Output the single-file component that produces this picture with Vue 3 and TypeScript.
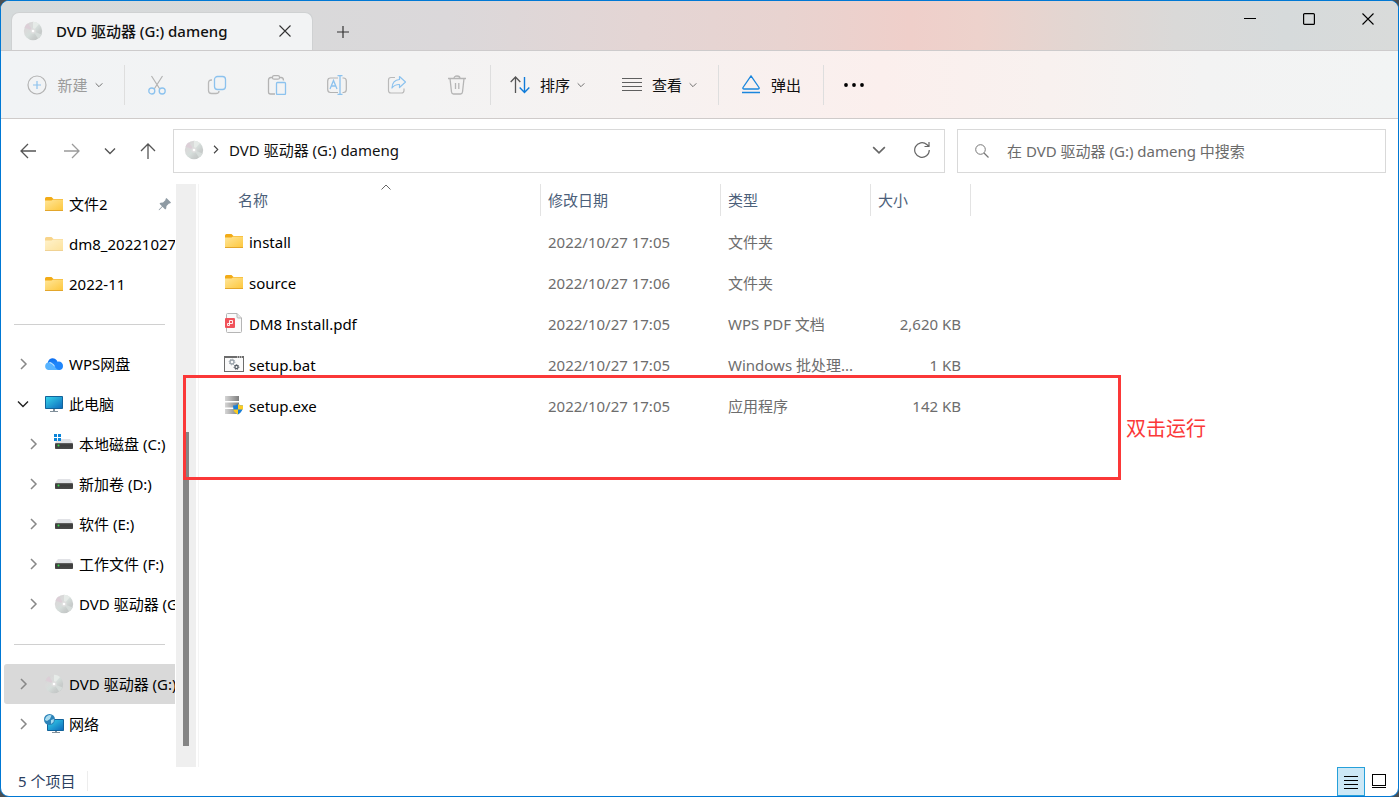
<script setup lang="ts">
import { ref } from 'vue'

interface TreeItem {
  label: string
  icon: string
  level: number
  state?: 'closed' | 'open'
  pinned?: boolean
  selected?: boolean
}

interface FileRow {
  name: string
  icon: string
  date: string
  type: string
  size: string
}

const drive = 'DVD 驱动器 (G:) dameng'
const query = ref('')

const groups: TreeItem[][] = [
  [
    { label: '文件2', icon: 'folder', level: 0, pinned: true },
    { label: 'dm8_20221027', icon: 'folder-pale', level: 0 },
    { label: '2022-11', icon: 'folder', level: 0 },
  ],
  [
    { label: 'WPS网盘', icon: 'cloud', level: 0, state: 'closed' },
    { label: '此电脑', icon: 'pc', level: 0, state: 'open' },
    { label: '本地磁盘 (C:)', icon: 'disk-win', level: 1, state: 'closed' },
    { label: '新加卷 (D:)', icon: 'disk', level: 1, state: 'closed' },
    { label: '软件 (E:)', icon: 'disk', level: 1, state: 'closed' },
    { label: '工作文件 (F:)', icon: 'disk', level: 1, state: 'closed' },
    { label: 'DVD 驱动器 (G:)', icon: 'disc', level: 1, state: 'closed' },
  ],
  [
    { label: 'DVD 驱动器 (G:)', icon: 'disc', level: 0, state: 'closed', selected: true },
    { label: '网络', icon: 'network', level: 0, state: 'closed' },
  ],
]

const files: FileRow[] = [
  { name: 'install', icon: 'folder', date: '2022/10/27 17:05', type: '文件夹', size: '' },
  { name: 'source', icon: 'folder', date: '2022/10/27 17:06', type: '文件夹', size: '' },
  { name: 'DM8 Install.pdf', icon: 'pdf', date: '2022/10/27 17:05', type: 'WPS PDF 文档', size: '2,620 KB' },
  { name: 'setup.bat', icon: 'bat', date: '2022/10/27 17:05', type: 'Windows 批处理...', size: '1 KB' },
  { name: 'setup.exe', icon: 'exe', date: '2022/10/27 17:05', type: '应用程序', size: '142 KB' },
]

const editTools = [
  { icon: 'cut', label: '剪切' },
  { icon: 'copy', label: '复制' },
  { icon: 'paste', label: '粘贴' },
  { icon: 'rename', label: '重命名' },
  { icon: 'share', label: '共享' },
  { icon: 'trash', label: '删除' },
]
</script>

<template>
  <svg class="defs" aria-hidden="true">
    <defs>
      <linearGradient id="g-folder" x1="0" y1="0" x2="1" y2="1">
        <stop offset="0" stop-color="#ffe69a" /><stop offset="1" stop-color="#fdc83f" />
      </linearGradient>
      <linearGradient id="g-disc" x1="0" y1="0" x2="1" y2="1">
        <stop offset="0" stop-color="#d2d2d2" /><stop offset=".3" stop-color="#dadada" />
        <stop offset=".5" stop-color="#d6dedb" /><stop offset=".7" stop-color="#c9cdcc" />
        <stop offset="1" stop-color="#bcc0bf" />
      </linearGradient>
      <linearGradient id="g-screen" x1="0" y1="0" x2="1" y2="1">
        <stop offset="0" stop-color="#36d3ea" /><stop offset="1" stop-color="#0d6cbd" />
      </linearGradient>
      <linearGradient id="g-cloud" x1="0" y1="0" x2="0" y2="1">
        <stop offset="0" stop-color="#0a6cf0" /><stop offset="1" stop-color="#3aa5ff" />
      </linearGradient>
      <linearGradient id="g-disk" x1="0" y1="0" x2="0" y2="1">
        <stop offset="0" stop-color="#6a6a6a" /><stop offset=".3" stop-color="#3b3b3b" /><stop offset="1" stop-color="#4a4a4a" />
      </linearGradient>
      <linearGradient id="g-server" x1="0" y1="0" x2="1" y2="0">
        <stop offset="0" stop-color="#d6d6d6" /><stop offset="1" stop-color="#7e7e7e" />
      </linearGradient>
    </defs>
    <symbol id="folder" viewBox="0 0 20 20">
      <path d="M1 4.500q0-1.500 1.500-1.500h5l2 2h9.500v5H1z" fill="#f2ab17" />
      <path d="M1 6.500h6.500L9 5.500h10V16H1z" fill="url(#g-folder)" />
      <path d="M1 16.500h18" stroke="#e3a62b" />
    </symbol>
    <symbol id="folder-pale" viewBox="0 0 20 20">
      <g opacity=".5">
        <path d="M1 4.500q0-1.500 1.500-1.500h5l2 2h9.500v5H1z" fill="#f2ab17" />
        <path d="M1 6.500h6.500L9 5.500h10V16H1z" fill="url(#g-folder)" />
        <path d="M1 16.500h18" stroke="#e3a62b" />
      </g>
    </symbol>
    <symbol id="disc" viewBox="0 0 20 20">
      <circle cx="10" cy="10" r="9.200" fill="url(#g-disc)" />
      <path d="M10 10L1.500 6.500A9.200 9.200 0 0 1 5 2.300z" fill="#dccfd7" />
      <path d="M10 10L10 .8a9.200 9.200 0 0 1 6 2.200z" fill="#e6ebe8" />
      <path d="M10 10l8.500 3.500a9.200 9.200 0 0 1-3.500 4z" fill="#d6dcda" />
      <circle cx="10" cy="10" r="2.700" fill="#dedede" />
      <circle cx="10" cy="10" r="1.300" fill="#fff" />
    </symbol>
    <symbol id="cloud" viewBox="0 0 20 20">
      <path d="M4 11a5 5 0 0 1 9.500-3.500L16 16H6z" fill="url(#g-cloud)" />
      <path d="M8 16l3-5.500a4.500 4.500 0 0 1 3.500-3A4.300 4.300 0 0 1 19 12q0 4-4 4z" fill="#1f86fb" />
      <path d="M4.500 8.500c3-.5 5 1.500 6 3.500s2.500 4 5 4H4.200a3.800 3.800 0 0 1 .3-7.500z" fill="#58b4ff" />
      <path d="M5.500 8.500c2.500.5 4 2 5 3.800" stroke="#fff" stroke-width=".8" fill="none" />
    </symbol>
    <symbol id="pc" viewBox="0 0 20 20">
      <path d="M9 14h2v3H9zM6 17h8v1H6z" fill="#81909b" />
      <rect x="1" y="2" width="18" height="13" rx=".8" fill="#12639b" />
      <rect x="2" y="3" width="16" height="11" fill="url(#g-screen)" />
    </symbol>
    <symbol id="disk" viewBox="0 0 20 20">
      <path d="M4 5h12l3 4H1z" fill="#e1e2e6" />
      <rect x="1" y="9" width="18" height="6" rx=".8" fill="url(#g-disk)" />
      <circle cx="4.500" cy="11.500" r="1" fill="#35e04b" />
    </symbol>
    <symbol id="disk-win" viewBox="0 0 20 20">
      <path d="M4 5h12l3 4H1z" fill="#e1e2e6" />
      <rect x="1" y="9" width="18" height="6" rx=".8" fill="url(#g-disk)" />
      <circle cx="4.500" cy="11.500" r="1" fill="#35e04b" />
      <path d="M0 0h3v3H0zM4 0h3v3H4zM0 4h3v3H0zM4 4h3v3H4z" fill="#0b84d8" />
    </symbol>
    <symbol id="network" viewBox="0 0 20 20">
      <path d="M11 16h2v2h-2zM8 18h8v1H8z" fill="#81909b" />
      <rect x="3" y="5" width="17" height="12" rx=".8" fill="#12639b" />
      <rect x="4" y="6" width="15" height="10" fill="url(#g-screen)" />
      <circle cx="5.500" cy="5.500" r="5.500" fill="#2c83b8" />
      <path d="M2 3q3-3 5.500-1.500L6 5 3 7 .8 6zM7 6l3-1-.5 3L7 10z" fill="#a9dcf0" />
    </symbol>
    <symbol id="pdf" viewBox="0 0 20 20">
      <path d="M2.500 1.500Q2.500.5 3.500.5h9.500l4.500 4.500v13.500q0 1-1 1h-13q-1 0-1-1z" fill="#fafafa" stroke="#b5b5b5" />
      <path d="M13 .5V4q0 1 1 1h3.500" fill="#e8e8e8" stroke="#b5b5b5" />
      <rect x="1" y="5" width="10" height="10" rx="1" fill="#f0525a" />
      <path d="M5.500 7.500H8.500v3h-5v2h2v-5" fill="none" stroke="#fff" stroke-width=".9" />
    </symbol>
    <symbol id="bat" viewBox="0 0 20 20">
      <rect x=".5" y="2.500" width="19" height="15" fill="#fafafa" stroke="#6c6c6c" />
      <path d="M0 3h20" stroke="#6c6c6c" stroke-width="2" />
      <path d="M13 3h1M15 3h1M17 3h1" stroke="#fff" />
      <circle cx="8" cy="8" r="2" fill="none" stroke="#9aa3ab" stroke-width="1.300" />
      <circle cx="8" cy="8" r="2.900" fill="none" stroke="#9aa3ab" stroke-dasharray="1 1.280" />
      <circle cx="12.500" cy="13" r="1.600" fill="none" stroke="#555d65" stroke-width="1.300" />
      <circle cx="12.500" cy="13" r="2.400" fill="none" stroke="#555d65" stroke-dasharray="1 .9" />
    </symbol>
    <symbol id="exe" viewBox="0 0 20 20">
      <path d="M1 1h14v5H1zM1 7.500h14v5H1zM1 14h14v5H1z" fill="url(#g-server)" />
      <path d="M14 9q2 1.500 5 1.500 0 6.500-5 9-5-2.500-5-9 3 0 5-1.500z" fill="#1b7fd6" />
      <path d="M14 9q2 1.500 5 1.500V14.500h-5zM9.300 14.500H14v5q-4-2-4.700-5z" fill="#fccb22" />
    </symbol>
    <symbol id="pin" viewBox="0 0 14 14">
      <path d="M8.500 1l4.500 4.500-1 1-1 0L8.500 9l-.3 2.500-1 1L4.500 9.800 1.500 13l-.8.200.2-.8L4 9.200 1.500 6.700l1-1L5 5.500 7.500 3V2z" fill="#8e9aa3" />
    </symbol>

    <symbol id="cut" viewBox="0 0 20 20">
      <path d="M4.500 1L12.800 14M15.500 1L7.200 14" fill="none" stroke="#b3b3b3" stroke-width="1.200" />
      <g fill="none" stroke="#8cc2ee" stroke-width="1.300"><circle cx="4.800" cy="16" r="3" /><circle cx="15.200" cy="16" r="3" /></g>
    </symbol>
    <symbol id="copy" viewBox="0 0 20 20">
      <path d="M5 5H4.500Q1.500 5 1.500 8v7.500q0 3 3 3H9q3 0 3-2.500" fill="none" stroke="#b9b9b9" stroke-width="1.300" />
      <rect x="7.500" y="1.500" width="11" height="13" rx="3" fill="none" stroke="#8cc2ee" stroke-width="1.300" />
    </symbol>
    <symbol id="paste" viewBox="0 0 20 20">
      <path d="M6 2.500H4Q1.500 2.500 1.500 5v12Q1.500 19 3.500 19H8M12 2.500h2q2.500 0 2.500 3" fill="none" stroke="#b3b3b3" stroke-width="1.300" />
      <rect x="5.500" y=".7" width="7" height="3.500" rx="1.500" fill="none" stroke="#b3b3b3" stroke-width="1.200" />
      <rect x="9.500" y="7.500" width="9" height="12" rx="1" fill="none" stroke="#8cc2ee" stroke-width="1.300" />
    </symbol>
    <symbol id="rename" viewBox="0 0 20 20">
      <path d="M11 3H3.500Q.7 3 .7 6v8.500q0 3 2.800 3H11M15.500 3h1q2.800 0 2.800 3v8.500q0 3-2.800 3h-1" fill="none" stroke="#b3b3b3" stroke-width="1.200" />
      <path d="M13 .8v18.600M10.500.7h5M10.500 19.300h5M3 14L6.500 5.500 10 14M4.200 11h4.600" fill="none" stroke="#8cc2ee" stroke-width="1.300" />
    </symbol>
    <symbol id="share" viewBox="0 0 20 20">
      <path d="M8 2.500H4Q1.500 2.500 1.500 5v10.500Q1.500 18 4 18h10.500q2.500 0 2.500-2.500V13.500" fill="none" stroke="#b9b9b9" stroke-width="1.200" />
      <path d="M12.500 1.500l6 5.500-6 5.500V9.500Q8 9.200 5 13 5.300 5 12.500 4.500z" fill="none" stroke="#8cc2ee" stroke-width="1.200" stroke-linejoin="round" />
    </symbol>
    <symbol id="trash" viewBox="0 0 20 20">
      <path d="M1 3.500h18M3 3.500l1.500 13.500q.3 2 2 2h7q1.700 0 2-2L17 3.500M7 3.500Q7 1 10 1t3 2.500M8.500 8v6M11.800 8v6" fill="none" stroke="#b5b5b5" stroke-width="1.300" />
    </symbol>
    <symbol id="plus-circle" viewBox="0 0 20 20">
      <circle cx="10" cy="10" r="9" fill="none" stroke="#b3b3b3" stroke-width="1.200" />
      <path d="M10 6v8M6 10h8" stroke="#8cc2ee" stroke-width="1.200" />
    </symbol>
    <symbol id="sort" viewBox="0 0 20 20">
      <path d="M5.500 18V2M.7 7l4.800-5 4.800 5" fill="none" stroke="#555" stroke-width="1.300" />
      <path d="M14.500 2v15.500M9.700 12.500l4.800 5 4.800-5" fill="none" stroke="#0f7bd9" stroke-width="1.400" />
    </symbol>
    <symbol id="view" viewBox="0 0 20 20">
      <path d="M0 3.500h20M0 7.500h20M0 11.500h20M0 15.500h20" stroke="#5f5f5f" />
    </symbol>
    <symbol id="eject" viewBox="0 0 20 20">
      <path d="M10 .8L18 12.500q.5 1.500-1 1.500H3q-1.500 0-1-1.500z" fill="none" stroke="#1a86dd" stroke-width="1.300" stroke-linejoin="round" />
      <path d="M1 17.500h18" stroke="#1a86dd" stroke-width="1.400" />
    </symbol>
    <symbol id="dots" viewBox="0 0 20 20">
      <circle cx="2" cy="10" r="1.900" /><circle cx="10" cy="10" r="1.900" /><circle cx="18" cy="10" r="1.900" />
    </symbol>
    <symbol id="left" viewBox="0 0 16 16">
      <path d="M16 8H1M8 1L1 8l7 7" fill="none" stroke="currentColor" stroke-width="1.300" />
    </symbol>
    <symbol id="right" viewBox="0 0 16 16">
      <path d="M0 8h15M8 1l7 7-7 7" fill="none" stroke="currentColor" stroke-width="1.300" />
    </symbol>
    <symbol id="up" viewBox="0 0 16 16">
      <path d="M8 16V1M1 8l7-7 7 7" fill="none" stroke="currentColor" stroke-width="1.300" />
    </symbol>
    <symbol id="chev" viewBox="0 0 12 12">
      <path d="M1 3.500l5 5 5-5" fill="none" stroke="currentColor" stroke-width="1.400" />
    </symbol>
    <symbol id="chev-right" viewBox="0 0 12 12">
      <path d="M4 1l5 5-5 5" fill="none" stroke="currentColor" stroke-width="1.500" />
    </symbol>
    <symbol id="chev-up" viewBox="0 0 12 12">
      <path d="M1.500 8.500L6 4l4.500 4.500" fill="none" stroke="currentColor" />
    </symbol>
    <symbol id="refresh" viewBox="0 0 16 16">
      <path d="M15.300 8A7.300 7.300 0 1 1 12.800 2.500L15 4.500M15 0v4.500h-4.500" fill="none" stroke="currentColor" stroke-width="1.200" />
    </symbol>
    <symbol id="search" viewBox="0 0 14 14">
      <path d="M9 9l4.500 4.500" stroke="currentColor" stroke-width="1.200" /><circle cx="5.500" cy="5.500" r="4.800" fill="none" stroke="currentColor" />
    </symbol>
    <symbol id="close" viewBox="0 0 12 12">
      <path d="M.5.5l11 11M11.500.5l-11 11" stroke="currentColor" stroke-width="1.100" />
    </symbol>
    <symbol id="plus" viewBox="0 0 12 12">
      <path d="M6 0v12M0 6h12" stroke="currentColor" stroke-width="1.200" />
    </symbol>
    <symbol id="min" viewBox="0 0 12 12"><path d="M0 5.500h12" stroke="currentColor" /></symbol>
    <symbol id="max" viewBox="0 0 12 12">
      <rect x=".6" y=".6" width="10.800" height="10.800" rx="1" fill="none" stroke="currentColor" stroke-width="1.200" />
    </symbol>
    <symbol id="details" viewBox="0 0 16 16">
      <path d="M1 2.500h14M1 6.500h14M1 10.500h14M1 14.500h14" stroke="#000" />
    </symbol>
    <symbol id="thumbs" viewBox="0 0 16 16">
      <rect x="1.500" y=".5" width="13" height="11" fill="#fff" stroke="#000" /><path d="M1 13.500h14" stroke="#000" />
    </symbol>
  </svg>

  <div class="window">
    <header class="titlebar">
      <div class="tab">
        <svg class="i20"><use href="#disc" /></svg>
        <span class="tab-title">{{ drive }}</span>
        <button class="plain tab-close" aria-label="关闭标签页"><svg class="i12"><use href="#close" /></svg></button>
      </div>
      <button class="plain new-tab" aria-label="新建标签页"><svg class="i12"><use href="#plus" /></svg></button>
      <div class="caption">
        <button class="plain" aria-label="最小化"><svg class="i12"><use href="#min" /></svg></button>
        <button class="plain" aria-label="最大化"><svg class="i12"><use href="#max" /></svg></button>
        <button class="plain" aria-label="关闭"><svg class="i12"><use href="#close" /></svg></button>
      </div>
    </header>

    <div class="toolbar" role="toolbar">
      <button class="plain cmd new" disabled>
        <svg class="i20"><use href="#plus-circle" /></svg>新建<svg class="small"><use href="#chev" /></svg>
      </button>
      <div class="group edit">
        <button v-for="t in editTools" :key="t.icon" class="plain tool" :aria-label="t.label" disabled>
          <svg class="i20"><use :href="'#' + t.icon" /></svg>
        </button>
      </div>
      <div class="group wide">
        <button class="plain cmd"><svg class="i20"><use href="#sort" /></svg>排序<svg class="small"><use href="#chev" /></svg></button>
        <button class="plain cmd"><svg class="i20"><use href="#view" /></svg>查看<svg class="small"><use href="#chev" /></svg></button>
      </div>
      <div class="group eject">
        <button class="plain cmd"><svg class="i20"><use href="#eject" /></svg>弹出</button>
      </div>
      <div class="group more">
        <button class="plain cmd" aria-label="更多"><svg class="i20"><use href="#dots" /></svg></button>
      </div>
    </div>

    <div class="navbar">
      <div class="history">
        <button class="plain" aria-label="后退"><svg class="i16"><use href="#left" /></svg></button>
        <button class="plain dim" aria-label="前进"><svg class="i16"><use href="#right" /></svg></button>
        <button class="plain" aria-label="最近位置"><svg class="i12"><use href="#chev" /></svg></button>
        <button class="plain" aria-label="向上"><svg class="i16"><use href="#up" /></svg></button>
      </div>
      <div class="address">
        <svg class="i20"><use href="#disc" /></svg>
        <svg class="crumb-arrow"><use href="#chev-right" /></svg>
        <button class="plain crumb">{{ drive }}</button>
        <button class="plain addr-btn" aria-label="以前的位置"><svg class="i14"><use href="#chev" /></svg></button>
        <button class="plain addr-btn" aria-label="刷新"><svg class="i16"><use href="#refresh" /></svg></button>
      </div>
      <label class="search">
        <svg class="i14"><use href="#search" /></svg>
        <input v-model="query" type="text" aria-label="搜索" :placeholder="'在 ' + drive + ' 中搜索'" />
      </label>
    </div>

    <div class="content">
      <nav class="tree">
        <ul v-for="(group, g) in groups" :key="g">
          <li v-for="item in group" :key="item.label">
            <a href="#" class="node" :class="{ nested: item.level === 1, selected: item.selected }">
              <span class="twist" :class="{ open: item.state === 'open' }">
                <svg v-if="item.state" class="i12"><use :href="item.state === 'open' ? '#chev' : '#chev-right'" /></svg>
              </span>
              <svg class="i20"><use :href="'#' + item.icon" /></svg>
              <span class="node-label">{{ item.label }}</span>
              <svg v-if="item.pinned" class="i14 pin"><use href="#pin" /></svg>
            </a>
          </li>
        </ul>
      </nav>
      <div class="scroll"><div class="thumb"></div></div>

      <main class="files">
        <table>
          <colgroup><col class="c-name" /><col class="c-date" /><col class="c-type" /><col class="c-size" /></colgroup>
          <thead>
            <tr>
              <th class="first">名称<svg class="i12 sorted"><use href="#chev-up" /></svg></th>
              <th>修改日期</th>
              <th>类型</th>
              <th>大小</th>
            </tr>
          </thead>
          <tbody>
            <tr v-for="f in files" :key="f.name">
              <td class="name"><div class="name-box"><svg class="i20"><use :href="'#' + f.icon" /></svg>{{ f.name }}</div></td>
              <td>{{ f.date }}</td>
              <td>{{ f.type }}</td>
              <td class="size">{{ f.size }}</td>
            </tr>
          </tbody>
        </table>
      </main>

      <div class="mark"></div>
      <div class="mark-text">双击运行</div>
    </div>

    <footer class="status">
      <span class="count">5 个项目</span>
      <div class="modes">
        <button class="plain mode active" aria-label="详细信息"><svg class="i16"><use href="#details" /></svg></button>
        <button class="plain mode" aria-label="缩略图"><svg class="i16"><use href="#thumbs" /></svg></button>
      </div>
    </footer>
  </div>
</template>

<style>
body {
  margin: 0;
  background: #4a4f52;
}
</style>

<style scoped>
.defs { position: absolute; width: 0; height: 0; }
.window {
  box-sizing: border-box;
  display: flex;
  flex-direction: column;
  min-height: 100vh;
  overflow: hidden;
  border: 1px solid #0078d4;
  border-radius: 9px;
  background: #fff;
  color: #111;
  font: 15px/20px "Noto Sans", "Noto Sans CJK SC", sans-serif;
}
svg { display: block; flex: none; }
.i20 { width: 20px; height: 20px; }
.i16 { width: 16px; height: 16px; }
.i14 { width: 14px; height: 14px; }
.i12 { width: 12px; height: 12px; }
.small { width: 8px; height: 8px; color: #666; }
.plain {
  display: flex;
  align-items: center;
  justify-content: center;
  margin: 0;
  padding: 0;
  border: 0;
  background: none;
  color: inherit;
  font: inherit;
  white-space: nowrap;
}

.titlebar {
  display: flex;
  height: 50px;
  background: linear-gradient(90deg, #d5dadb 0%, #d9d9da 22%, #dbd8da 32%, #e4d5d4 46%, #e8d3d0 56%, #efcfca 65%, #edd2cc 70%, #e2d6d2 77%, #dad9d8 84%, #d6dadb 92%, #d9dbda 100%);
}
.tab {
  box-sizing: border-box;
  display: flex;
  align-items: center;
  width: 302px;
  height: 39px;
  margin: 11px 0 0 10px;
  padding: 0 15px 2px 11px;
  border: 1px solid #cfd1d2;
  border-bottom: 0;
  border-radius: 8px 8px 0 0;
  background: #f2f3f4;
}
.tab-title { flex: 1; margin-left: 13px; font-weight: 500; }
.tab-close { width: 24px; height: 24px; color: #333; }
.new-tab { width: 60px; padding-top: 12px; color: #333; }
.caption { display: flex; height: 36px; margin-left: auto; padding-right: 1px; color: #000; }
.caption button { width: 59px; }

.toolbar {
  display: flex;
  align-items: center;
  height: 67px;
  border-top: 1px solid #cdcbcc;
  border-bottom: 1px solid #cfcbca;
  margin-top: -1px;
  background: linear-gradient(90deg, #f1f3f5 0%, #f3f3f3 30%, #f6f2f1 45%, #fbefed 63%, #f8f1ef 75%, #f3f3f3 86%, #f2f4f4 100%);
}
.cmd { gap: 10px; height: 40px; }
.cmd .small { margin-left: -3px; }
.new { box-sizing: border-box; width: 123px; padding-left: 5px; color: #9b9b9b; }
.group { display: flex; align-items: center; height: 40px; border-left: 1px solid #dedede; }
.tool { width: 60px; height: 40px; }
.edit { padding: 0 3px 0 2px; }
.wide { gap: 37px; padding: 0 21px 0 19px; }
.eject { padding: 0 22px; }
.more { padding: 0 20px; }

.navbar {
  box-sizing: border-box;
  display: grid;
  grid-template-columns: 160px minmax(0, 9fr) minmax(0, 5fr);
  align-items: center;
  gap: 12px;
  height: 65px;
  padding: 0 12px 2px 0;
}
.history { display: flex; align-items: center; gap: 24px; padding-left: 19px; color: #555; }
.history .dim { margin-left: 4px; color: #9b9b9b; }
.address, .search {
  box-sizing: border-box;
  display: flex;
  align-items: center;
  height: 44px;
  border: 1px solid #d9d9d9;
}
.address { padding: 0 14px 2px 10px; }
.crumb-arrow { width: 9px; height: 9px; margin: 0 9px 0 7px; color: #444; }
.crumb { margin-right: auto; }
.addr-btn { margin-left: 28px; color: #666; }
.search { gap: 18px; padding: 0 17px; color: #777; }
.search input { flex: 1; min-width: 0; padding: 0; border: 0; outline: 0; background: none; font: inherit; color: #333; }
.search input::placeholder { color: #6b6b6b; opacity: 1; }

.content { position: relative; display: flex; flex: 1; }
.tree { width: 174px; margin-right: 1px; overflow: hidden; }
.tree ul { margin: 0; padding: 0; list-style: none; }
.tree ul + ul::before {
  content: "";
  display: block;
  height: 1px;
  margin: 20px 10px 19px 13px;
  background: #d0d0d0;
}
.node {
  display: flex;
  align-items: center;
  height: 40px;
  margin-left: 3px;
  padding-left: 13px;
  border-radius: 3px 0 0 3px;
  color: #000;
  text-decoration: none;
  white-space: nowrap;
}
.node.nested { padding-left: 23px; }
.node.selected { background: #d9d9d9; }
.twist { flex: none; width: 12px; margin-right: 15px; color: #888; }
.twist.open { color: #222; }
.node-label { margin-left: 5px; }
.pin { margin: 0 3px 0 auto; }
.scroll { box-sizing: border-box; flex: none; width: 20px; padding-top: 248px; background: #efefef; }
.thumb { width: 6px; height: 314px; margin-left: 7px; background: #858585; }

.files { flex: 1; min-width: 0; margin-left: 2px; border-left: 1px solid #f4f4f4; }
table { width: 772px; table-layout: fixed; border-collapse: separate; border-spacing: 0; color: #6d6d6d; }
.c-name { width: 342px; }
.c-date { width: 180px; }
.c-type { width: 150px; }
.c-size { width: 100px; }
th {
  position: relative;
  box-sizing: border-box;
  height: 32px;
  padding: 0 0 0 7px;
  border-right: 1px solid #e3e3e3;
  color: #4c607a;
  font-weight: 400;
  text-align: left;
}
th.first { padding-left: 39px; }
.sorted { position: absolute; top: -3px; left: 181px; color: #666; }
tbody::before { content: ""; display: block; height: 5px; }
td { height: 41px; padding: 0 0 0 7px; white-space: nowrap; }
td.name { padding-left: 25px; color: #000; }
.name-box { display: flex; align-items: center; gap: 5px; }
.name-box svg { margin-bottom: 2px; }
td.size { padding: 0 10px 0 0; text-align: right; }

.mark {
  position: absolute;
  top: 191px;
  left: 182px;
  box-sizing: border-box;
  width: 938px;
  height: 105px;
  border: 3px solid #fb3838;
  pointer-events: none;
}
.mark-text { position: absolute; top: 233px; left: 1125px; color: #fb3838; font-size: 20px; line-height: 24px; }

.status { display: flex; align-items: center; height: 29px; padding-right: 5px; }
.count { margin-bottom: 2px; padding: 0 12px 0 17px; border-right: 1px solid #ededed; color: #2b405f; }
.modes { display: flex; margin-left: auto; }
.mode { box-sizing: border-box; width: 28px; height: 29px; }
.mode.active { border: 1px solid #26a0da; background: #cce8f6; }
</style>
